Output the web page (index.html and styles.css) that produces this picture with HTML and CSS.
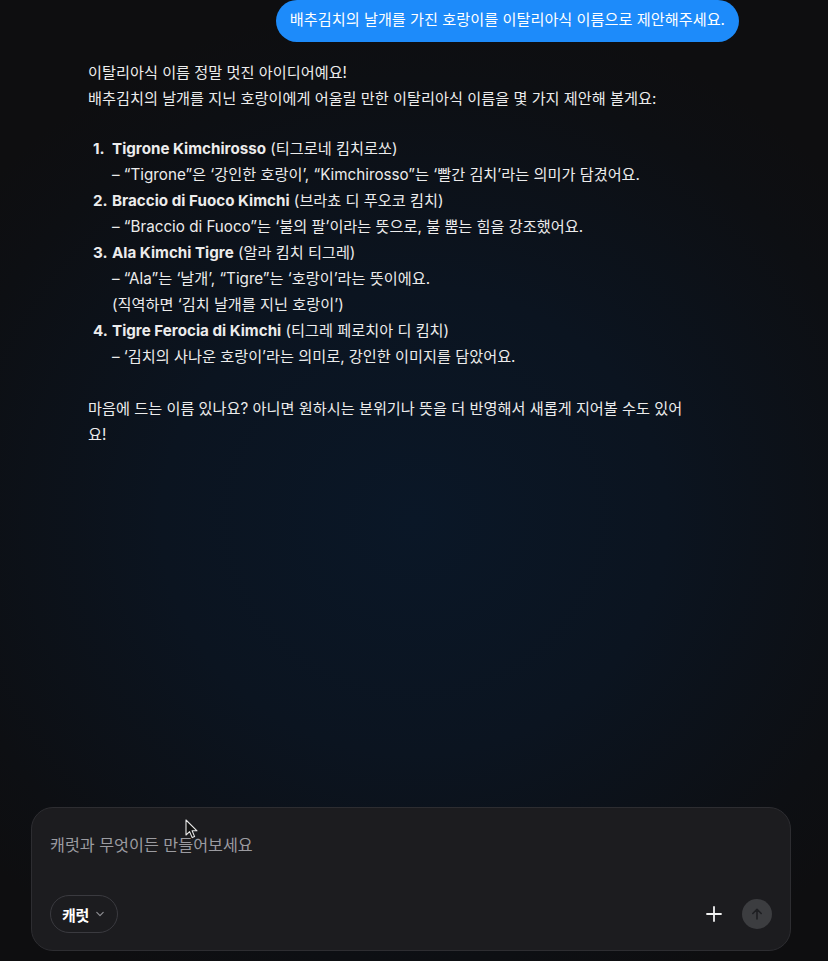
FILE: index.html
```html
<!DOCTYPE html>
<html lang="ko">
<head>
<meta charset="utf-8">
<link rel="stylesheet" href="styles.css">
</head>
<body>
<div class="page">
  <main class="chat">
    <div class="user-row">
      <div class="bubble">배추김치의 날개를 가진 호랑이를 이탈리아식 이름으로 제안해주세요.</div>
    </div>
    <div class="answer">
      <p class="para">이탈리아식 이름 정말 멋진 아이디어예요!<br>배추김치의 날개를 지닌 호랑이에게 어울릴 만한 이탈리아식 이름을 몇 가지 제안해 볼게요:</p>
      <div class="list">
        <div class="item">
          <span class="num">1.</span>
          <div class="body">
            <div><b>Tigrone Kimchirosso</b> (티그로네 킴치로쏘)</div>
            <div>– “Tigrone”은 ‘강인한 호랑이’, “Kimchirosso”는 ‘빨간 김치’라는 의미가 담겼어요.</div>
          </div>
        </div>
        <div class="item">
          <span class="num">2.</span>
          <div class="body">
            <div><b>Braccio di Fuoco Kimchi</b> (브라쵸 디 푸오코 킴치)</div>
            <div>– “Braccio di Fuoco”는 ‘불의 팔’이라는 뜻으로, 불 뿜는 힘을 강조했어요.</div>
          </div>
        </div>
        <div class="item">
          <span class="num">3.</span>
          <div class="body">
            <div><b>Ala Kimchi Tigre</b> (알라 킴치 티그레)</div>
            <div>– “Ala”는 ‘날개’, “Tigre”는 ‘호랑이’라는 뜻이에요.</div>
            <div>(직역하면 ‘김치 날개를 지닌 호랑이’)</div>
          </div>
        </div>
        <div class="item">
          <span class="num">4.</span>
          <div class="body">
            <div><b>Tigre Ferocia di Kimchi</b> (티그레 페로치아 디 킴치)</div>
            <div>– ‘김치의 사나운 호랑이’라는 의미로, 강인한 이미지를 담았어요.</div>
          </div>
        </div>
      </div>
      <p class="para last">마음에 드는 이름 있나요? 아니면 원하시는 분위기나 뜻을 더 반영해서 새롭게 지어볼 수도 있어요!</p>
    </div>
  </main>
  <div class="composer">
    <div class="placeholder">캐럿과 무엇이든 만들어보세요</div>
    <div class="toolbar">
      <button class="chip">캐럿
        <svg class="chev" width="10" height="10" viewBox="0 0 10 10"><path d="M1.8 3.4 L5 6.6 L8.2 3.4" fill="none" stroke="#8d8d92" stroke-width="1.2" stroke-linecap="round" stroke-linejoin="round"/></svg>
      </button>
      <div class="actions">
        <svg class="plus" width="18" height="18" viewBox="0 0 18 18"><path d="M9 2 V16 M2 9 H16" stroke="#f2f2f2" stroke-width="1.8" stroke-linecap="round"/></svg>
        <div class="send">
          <svg width="16" height="16" viewBox="0 0 16 16"><path d="M8 13 V3.5 M3.8 7.5 L8 3.3 L12.2 7.5" fill="none" stroke="#1e1f22" stroke-width="1.6" stroke-linecap="round" stroke-linejoin="round"/></svg>
        </div>
      </div>
    </div>
    <svg class="pointer" width="14" height="22" viewBox="0 0 14 22"><path d="M1 1 L1 16 L4.6 12.6 L7.2 18.6 L9.6 17.6 L7.1 11.8 L12 11.8 Z" fill="#111" stroke="#e8e8e8" stroke-width="1.1" stroke-linejoin="round"/></svg>
  </div>
</div>
</body>
</html>
```
FILE: styles.css
```css
* { box-sizing: border-box; }
html, body { margin: 0; padding: 0; }
body {
  width: 828px;
  height: 961px;
  overflow: hidden;
  background: radial-gradient(ellipse 560px 520px at 414px 520px, #0a1727 0%, #0b1420 45%, #0d0f13 85%, #0e0e10 100%);
  font-family: "Inter", "Noto Sans CJK KR", sans-serif;
  color: #ececec;
}
.page {
  height: 961px;
  display: flex;
  flex-direction: column;
}
.chat {
  flex: 1;
  padding: 0 88px 0 88px;
}
.user-row {
  display: flex;
  justify-content: flex-end;
  padding-right: 1px;
}
.bubble {
  background: #1d8bfa;
  color: #ffffff;
  font-size: 15.2px;
  line-height: 20px;
  letter-spacing: 0;
  padding: 10px 14px 12px;
  border-radius: 22px;
  height: 42px;
}
.answer {
  margin-top: 18px;
  width: 604px;
  font-size: 15.2px;
  line-height: 26px;
  letter-spacing: 0;
}
.para { margin: 0; }
.list { margin: 24px 0 26px; }
.item {
  display: flex;
  padding-left: 5px;
}
.num {
  width: 19px;
  flex: none;
  font-weight: 700;
}
.body b { font-weight: 700; }
.composer {
  position: relative;
  margin: 0 37px 10px 31px;
  height: 144px;
  background: #1c1c1f;
  border: 1px solid #2d2d31;
  border-radius: 22px;
  padding: 24px 18px 17px 18px;
  display: flex;
  flex-direction: column;
  justify-content: space-between;
}
.placeholder {
  font-size: 16.2px;
  line-height: 26px;
  color: #9b9ba0;
  letter-spacing: 0;
}
.toolbar {
  display: flex;
  align-items: center;
  justify-content: space-between;
}
.chip {
  display: flex;
  align-items: center;
  gap: 6px;
  height: 38px;
  padding: 0 12px 0 11px;
  border-radius: 19px;
  border: 1px solid #3a3a3f;
  background: transparent;
  color: #ffffff;
  font-family: "Inter", "Noto Sans CJK KR", sans-serif;
  font-size: 15px;
  font-weight: 700;
  letter-spacing: -0.3px;
}
.actions {
  display: flex;
  align-items: center;
  gap: 19px;
}
.send {
  width: 30px;
  height: 30px;
  border-radius: 50%;
  background: #3c3d40;
  display: flex;
  align-items: center;
  justify-content: center;
}
.pointer {
  position: absolute;
  left: 153px;
  top: 11px;
}
```
